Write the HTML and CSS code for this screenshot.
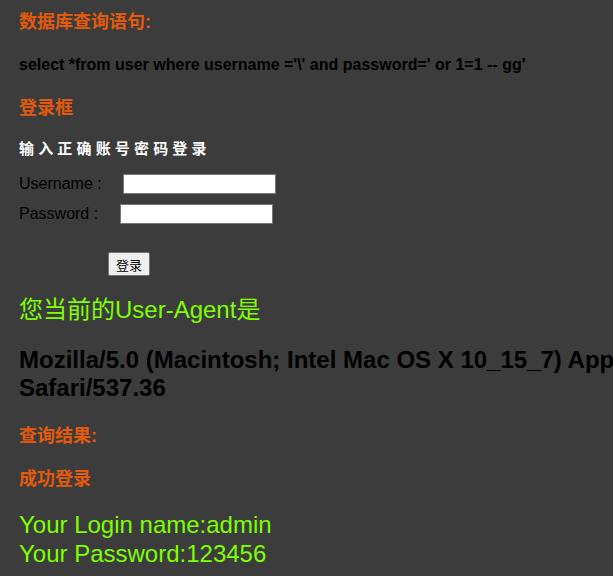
FILE: index.html
```html
<!DOCTYPE html>
<html>
<head>
<meta charset="utf-8">
<link rel="stylesheet" href="styles.css">
</head>
<body>
<div class="page">
  <h3 class="title">数据库查询语句:</h3>
  <p class="sql">select *from user where username ='\' and password=' or 1=1 -- gg'</p>
  <h3 class="title login-title">登录框</h3>
  <p class="hint">输 入 正 确 账 号 密 码 登 录</p>
  <form class="login">
    <div class="row row-user"><span class="label">Username :</span><input class="field" type="text"></div>
    <div class="row row-pass"><span class="label">Password :</span><input class="field" type="password"></div>
    <div class="actions"><button class="btn" type="button">登录</button></div>
  </form>
  <p class="ua-title">您当前的User-Agent是</p>
  <p class="ua">Mozilla/5.0 (Macintosh; Intel Mac OS X 10_15_7) AppleWebKit/537.36 (KHTML, like Gecko) Chrome/120.0.0.0<br>Safari/537.36</p>
  <h3 class="title result">查询结果:</h3>
  <h3 class="title success">成功登录</h3>
  <p class="info">Your Login name:admin<br>Your Password:123456</p>
</div>
</body>
</html>
```
FILE: styles.css
```css
html, body {
  margin: 0;
  padding: 0;
  background: #3c3c3c;
  overflow: hidden;
}
body {
  font-family: "Liberation Sans", "Noto Sans CJK SC", sans-serif;
  color: #000;
}
.page {
  padding: 11px 0 0 19px;
}
.title {
  margin: 0;
  font-size: 18px;
  font-weight: bold;
  line-height: 22px;
  color: #e35a0c;
}
.sql {
  margin: 21px 0 0;
  font-size: 16px;
  font-weight: bold;
  line-height: 22px;
}
.login-title {
  margin-top: 21px;
}
.hint {
  margin: 20px 0 0;
  font-size: 15px;
  font-weight: bold;
  line-height: 20px;
  color: #fff;
}
.login {
  margin: 15px 0 0;
}
.row {
  display: flex;
  align-items: center;
  height: 20px;
  margin-bottom: 10px;
  font-size: 16px;
}
.label {
  display: inline-block;
}
.row-user .label { width: 104px; }
.row-pass .label { width: 101px; }
.field {
  box-sizing: border-box;
  width: 153px;
  height: 20px;
  margin: 0;
  padding: 1px 2px;
  border: 1px solid #767676;
  background: #fff;
}
.actions {
  padding: 18px 0 0 89px;
}
.btn {
  box-sizing: border-box;
  height: 24px;
  width: 42px;
  padding: 0;
  font-family: "Noto Sans CJK SC", sans-serif;
  font-size: 13px;
  color: #000;
  background: #efefef;
  border: 1px solid #767676;
  border-radius: 2px;
}
.ua-title {
  margin: 20px 0 0;
  font-size: 24px;
  line-height: 28px;
  color: #7fff00;
}
.ua {
  margin: 22px 0 0;
  font-size: 24px;
  font-weight: bold;
  line-height: 28px;
  white-space: nowrap;
}
.result {
  margin-top: 23px;
}
.success {
  margin-top: 21px;
}
.info {
  margin: 20px 0 0;
  font-size: 24px;
  line-height: 29px;
  color: #7fff00;
}
```
